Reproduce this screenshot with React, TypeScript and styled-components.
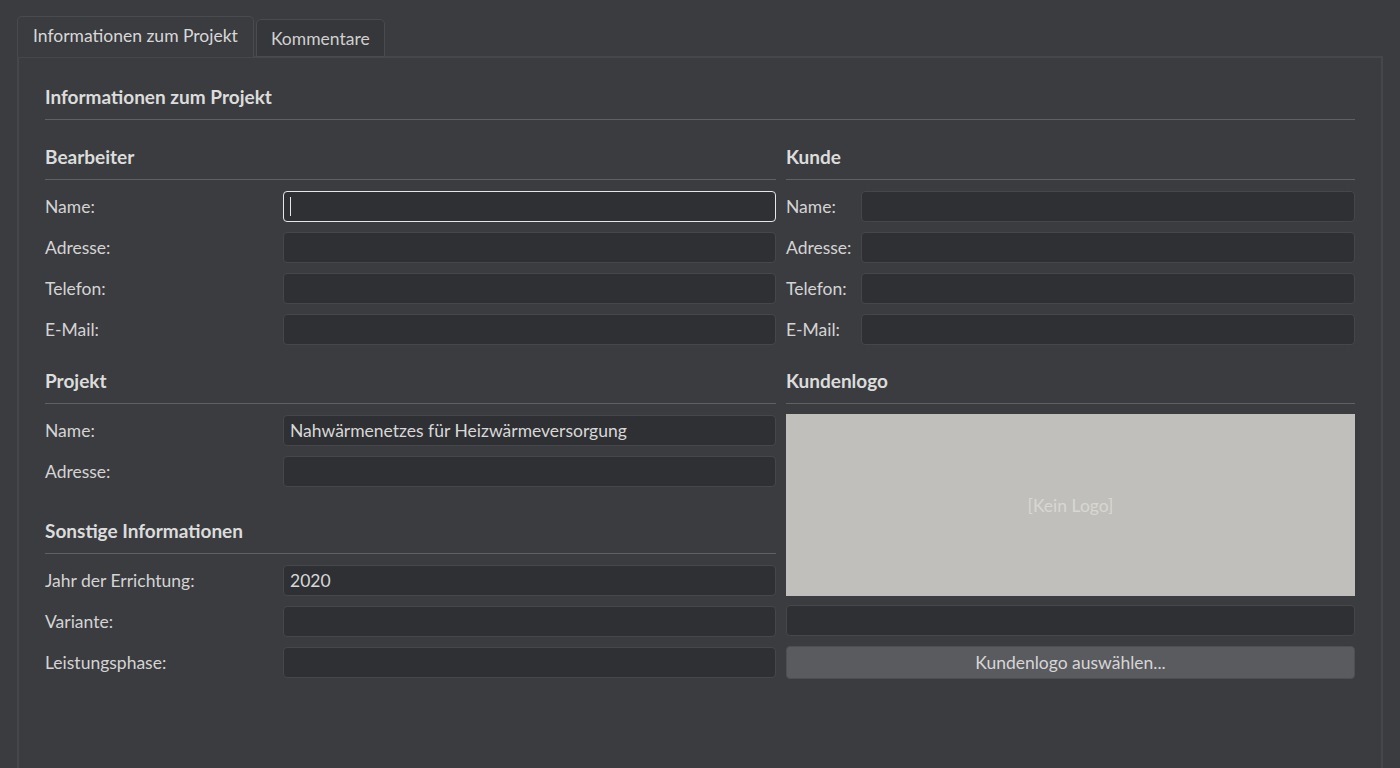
import React from "react";
import styled, { createGlobalStyle } from "styled-components";

const GlobalStyle = createGlobalStyle`
  html, body {
    margin: 0;
    padding: 0;
    background: #3b3c40;
    font-family: Lato, "Open Sans", "Liberation Sans", sans-serif;
    color: #d4d4d4;
  }
  * { box-sizing: border-box; }
`;

const Page = styled.div`
  width: 1400px;
  height: 768px;
  overflow: hidden;
  padding: 17px 0 0 17px;
  display: flex;
  flex-direction: column;
`;

const TabBar = styled.div`
  display: flex;
  align-items: flex-end;
  gap: 2px;
  height: 40px;
  position: relative;
  z-index: 1;
  margin-bottom: -1px;
`;

const Tab = styled.div<{ $active?: boolean }>`
  height: ${(p) => (p.$active ? "41px" : "38px")};
  padding: 0 ${(p) => (p.$active ? "15px" : "14px")};
  display: flex;
  align-items: center;
  padding-bottom: ${(p) => (p.$active ? "4px" : "0")};
  font-size: 17.5px;
  color: ${(p) => (p.$active ? "#d8d8d8" : "#d0d0d0")};
  background: ${(p) => (p.$active ? "#3b3c40" : "#36373a")};
  border: 1px solid #4a4b4f;
  border-bottom: ${(p) => (p.$active ? "none" : "1px solid #4a4b4f")};
  border-radius: 5px 5px 0 0;
`;

const Panel = styled.div`
  width: 1366px;
  flex: 1;
  border: 2px solid #46474b;
  border-bottom: none;
  background: #3b3c40;
  padding: 17px 26px 0 26px;
`;

const Title = styled.div`
  font-size: 19px;
  font-weight: 700;
  line-height: 22px;
  color: #dcdcdc;
  padding: 11px 0 11px;
  border-bottom: 1px solid #5f6064;
`;

const Columns = styled.div`
  display: grid;
  grid-template-columns: 731px 1fr;
  column-gap: 10px;
  margin-top: 26px;
`;

const Column = styled.div`
  display: flex;
  flex-direction: column;
`;

const Section = styled.section<{ $gapAfter?: number }>`
  display: flex;
  flex-direction: column;
  margin-bottom: ${(p) => p.$gapAfter ?? 0}px;
`;

const Heading = styled.h3`
  margin: 0 0 11px;
  font-size: 19px;
  font-weight: 700;
  line-height: 22px;
  color: #dcdcdc;
  padding-bottom: 11px;
  border-bottom: 1px solid #5f6064;
`;

const Rows = styled.div`
  display: flex;
  flex-direction: column;
  gap: 10px;
`;

const Row = styled.div<{ $labelWidth: number }>`
  display: grid;
  grid-template-columns: ${(p) => p.$labelWidth}px 1fr;
  align-items: center;
`;

const Label = styled.label`
  font-size: 17.5px;
  color: #d4d4d4;
  line-height: 31px;
`;

const FieldWrap = styled.div`
  position: relative;
`;

const Field = styled.input<{ $focused?: boolean }>`
  width: 100%;
  height: 31px;
  display: block;
  background: #2f3033;
  border: ${(p) => (p.$focused ? "1.5px solid #e6e6e6" : "1px solid #46474b")};
  border-radius: 4px;
  padding: 0 6px;
  font-family: inherit;
  font-size: 17.5px;
  color: #d8d8d8;
  outline: none;
`;

const Caret = styled.span`
  position: absolute;
  left: 7px;
  top: 6px;
  width: 1px;
  height: 19px;
  background: #e6e6e6;
`;

const LogoBox = styled.div`
  height: 182px;
  margin-top: -1px;
  background: #c1bfbb;
  display: flex;
  align-items: center;
  justify-content: center;
  font-size: 17.5px;
  color: #d8d7d3;
  margin-bottom: 9px;
`;

const PickButton = styled.button`
  margin-top: 10px;
  height: 33px;
  width: 100%;
  background: #5a5b5f;
  border: 1px solid #4e4f53;
  border-radius: 4px;
  font-family: inherit;
  font-size: 17.5px;
  color: #d6d6d6;
  cursor: pointer;
`;

type FieldDef = { label: string; value?: string; focused?: boolean };

const FieldRows = ({ fields, labelWidth }: { fields: FieldDef[]; labelWidth: number }) => (
  <Rows>
    {fields.map((f) => (
      <Row key={f.label} $labelWidth={labelWidth}>
        <Label>{f.label}</Label>
        <FieldWrap>
          <Field readOnly $focused={f.focused} value={f.value ?? ""} />
          {f.focused && <Caret />}
        </FieldWrap>
      </Row>
    ))}
  </Rows>
);

export default function App() {
  return (
    <>
      <GlobalStyle />
      <Page>
        <TabBar>
          <Tab $active>Informationen zum Projekt</Tab>
          <Tab>Kommentare</Tab>
        </TabBar>
        <Panel>
          <Title>Informationen zum Projekt</Title>
          <Columns>
            <Column>
              <Section $gapAfter={25}>
                <Heading>Bearbeiter</Heading>
                <FieldRows
                  labelWidth={238}
                  fields={[
                    { label: "Name:", focused: true },
                    { label: "Adresse:" },
                    { label: "Telefon:" },
                    { label: "E-Mail:" },
                  ]}
                />
              </Section>
              <Section $gapAfter={33}>
                <Heading>Projekt</Heading>
                <FieldRows
                  labelWidth={238}
                  fields={[
                    { label: "Name:", value: "Nahwärmenetzes für Heizwärmeversorgung" },
                    { label: "Adresse:" },
                  ]}
                />
              </Section>
              <Section>
                <Heading>Sonstige Informationen</Heading>
                <FieldRows
                  labelWidth={238}
                  fields={[
                    { label: "Jahr der Errichtung:", value: "2020" },
                    { label: "Variante:" },
                    { label: "Leistungsphase:" },
                  ]}
                />
              </Section>
            </Column>
            <Column>
              <Section $gapAfter={25}>
                <Heading>Kunde</Heading>
                <FieldRows
                  labelWidth={75}
                  fields={[
                    { label: "Name:" },
                    { label: "Adresse:" },
                    { label: "Telefon:" },
                    { label: "E-Mail:" },
                  ]}
                />
              </Section>
              <Section>
                <Heading>Kundenlogo</Heading>
                <LogoBox>[Kein Logo]</LogoBox>
                <Field readOnly value="" />
                <PickButton>Kundenlogo auswählen...</PickButton>
              </Section>
            </Column>
          </Columns>
        </Panel>
      </Page>
    </>
  );
}
